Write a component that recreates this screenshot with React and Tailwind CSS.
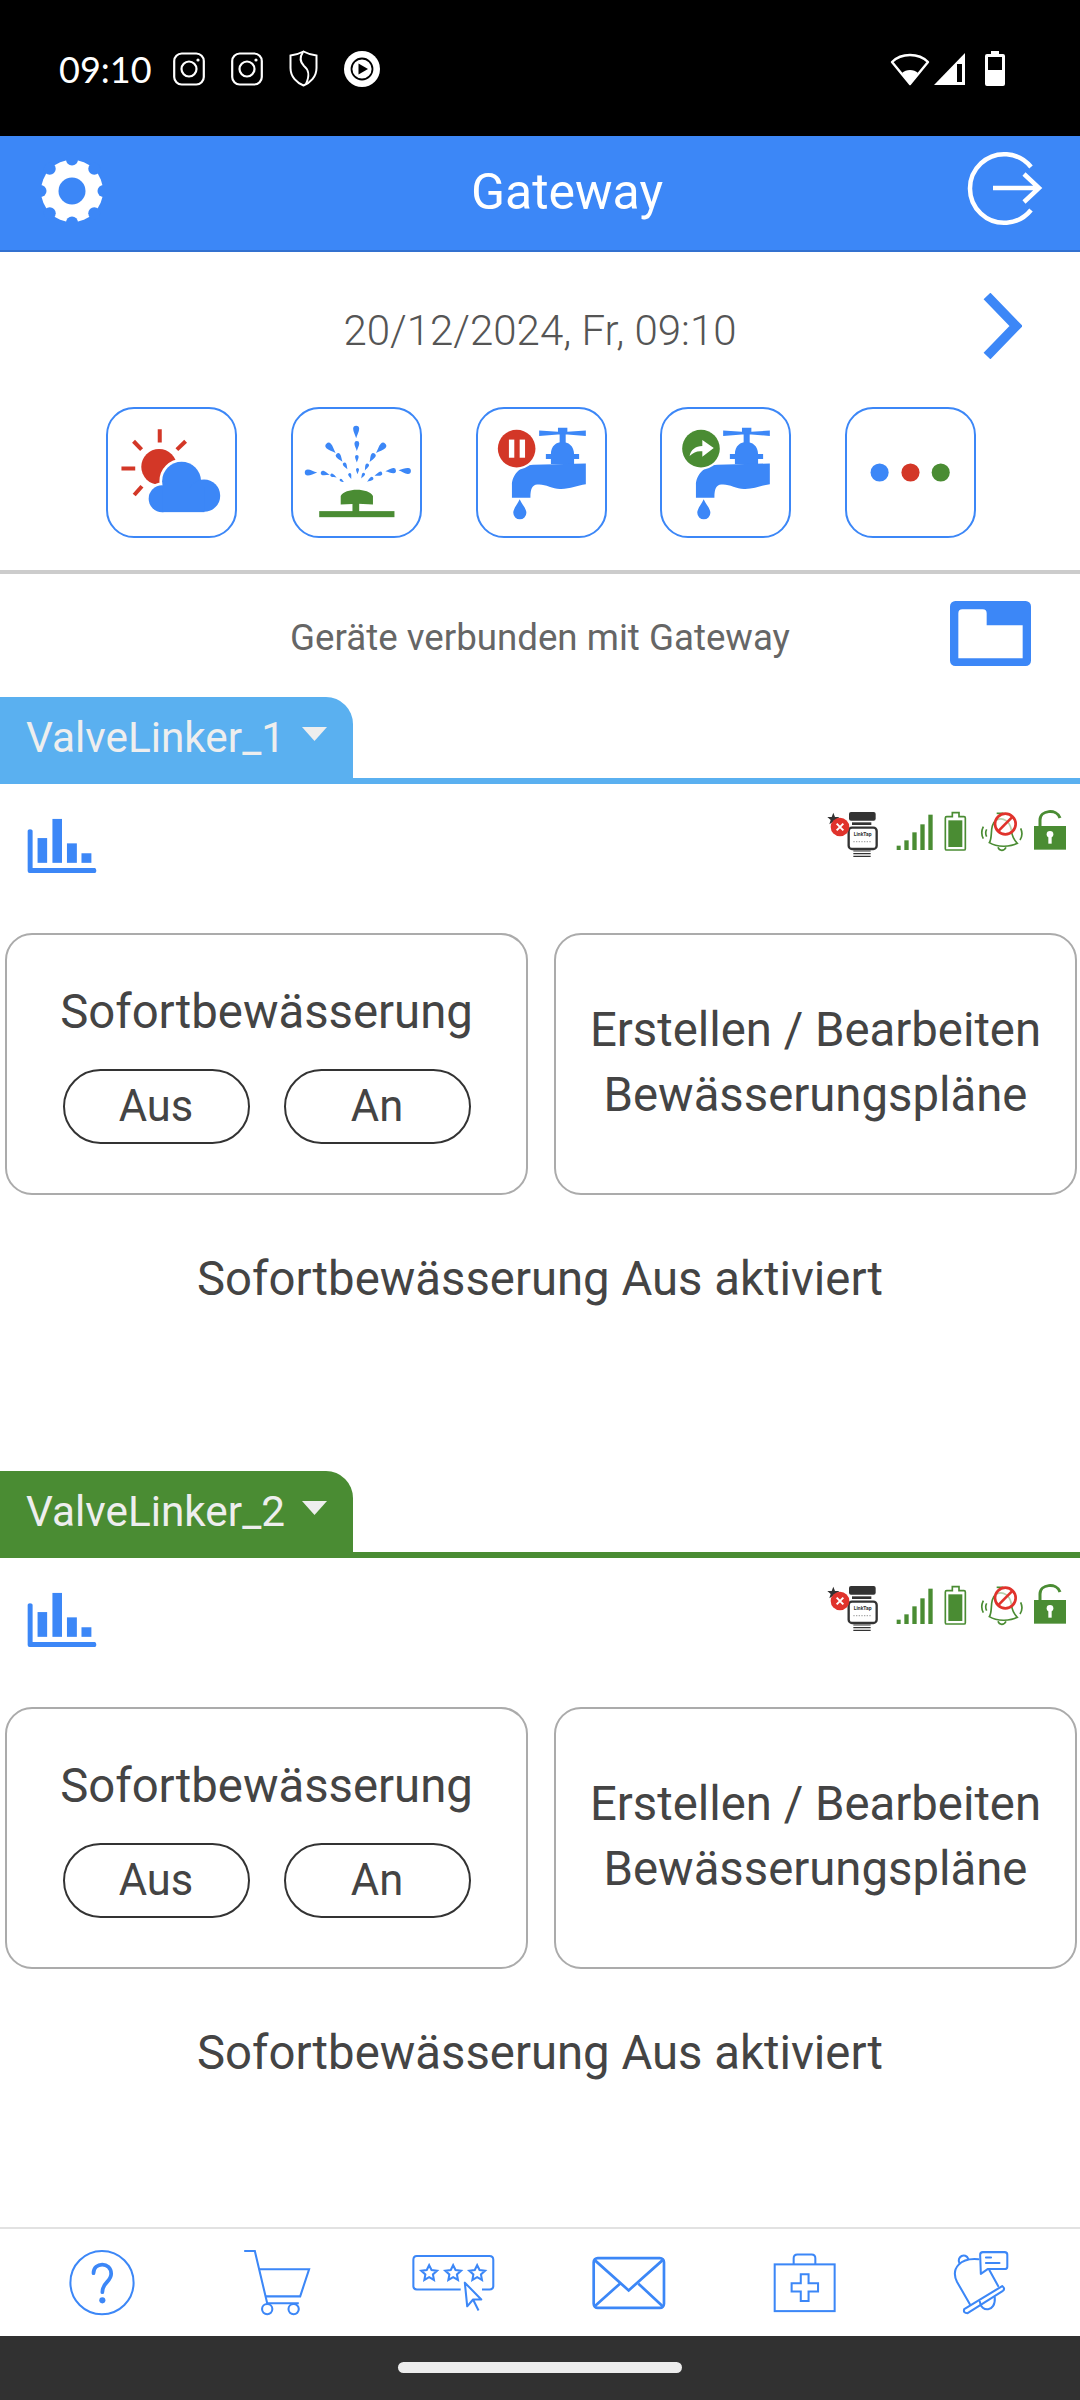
import React from "react";

const BLUE = "#3c87f7";
const RED = "#d33727";
const GREEN = "#4a8c33";
const BOX = "w-[131px] h-[131px] -m-[2px]";

function Gear() {
  const notches = [0, 45, 90, 135, 180, 225, 270, 315];
  return (
    <svg width="64" height="64" viewBox="-32 -32 64 64" className="-mt-[4px]">
      <circle r="31" fill="#fff" />
      {notches.map((a) => (
        <circle key={a} cx={31.5 * Math.sin((a * Math.PI) / 180)} cy={-31.5 * Math.cos((a * Math.PI) / 180)} r="6" fill={BLUE} />
      ))}
      <circle r="13.5" fill={BLUE} />
    </svg>
  );
}

function Insta() {
  return (
    <svg width="32" height="34" viewBox="0 0 32 34" fill="none" stroke="#fff" strokeWidth="2.2">
      <rect x="1.2" y="1.5" width="29.6" height="31" rx="7.5" />
      <circle cx="16" cy="17" r="7.5" />
      <circle cx="25" cy="8" r="1.6" fill="#fff" stroke="none" />
    </svg>
  );
}

function StatusBar() {
  return (
    <div className="h-[136px] bg-black flex items-center justify-between pl-[59px] pr-[75px] pt-[1px] shrink-0">
      <div className="flex items-center">
        <span className="text-white text-[36px] leading-none w-[114px] font-['Lato',sans-serif]">09:10</span>
        <div className="flex items-center gap-[26px]">
          <Insta />
          <Insta />
          <svg width="29" height="37" viewBox="0 0 29 37" fill="none" stroke="#fff" strokeWidth="2">
            <path d="M14.5 1.5C19 4 24 5 27.5 5.5V18C27.5 27 21 33 14.5 35.5 8 33 1.5 27 1.5 18V5.5C5 5 10 4 14.5 1.5Z" />
            <path d="M14 2C10 8 11 12 15 16 20 20 21 25 17 34" />
          </svg>
          <svg width="36" height="38" viewBox="0 0 36 38">
            <circle cx="18" cy="19" r="18" fill="#fff" />
            <circle cx="18" cy="19" r="10.5" fill="none" stroke="#000" strokeWidth="1.8" />
            <path d="M14.5 13.5L24 19L14.5 24.5Z" fill="#000" />
          </svg>
        </div>
      </div>
      <div className="flex items-center">
        <svg width="40" height="34" viewBox="0 0 40 34" className="mr-[3px]">
          <path d="M20 3C12 3 6 6 2 10L20 32L38 10C34 6 28 3 20 3Z" fill="none" stroke="#fff" strokeWidth="2.4" strokeLinejoin="round" />
          <path d="M12 21C14 19 17 18 20 18S26 19 28 21L20 32Z" fill="#fff" />
        </svg>
        <svg width="33" height="34" viewBox="0 0 33 34" className="mr-[19px]">
          <path d="M32 1V33H1Z" fill="#fff" />
          <rect x="24" y="12" width="5" height="18" fill="#000" />
        </svg>
        <svg width="20" height="35" viewBox="0 0 20 35">
          <path d="M6 0H14V3H18Q20 3 20 5V33Q20 35 18 35H2Q0 35 0 33V5Q0 3 2 3H6Z" fill="#fff" />
          <rect x="3" y="6" width="14" height="13" fill="#000" />
        </svg>
      </div>
    </div>
  );
}

function Header() {
  return (
    <div className="h-[116px] bg-[#3c87f7] border-b-2 border-[#3271d0] flex items-center justify-between pl-[40px] pr-[37px] shrink-0">
      <Gear />
      <span className="text-white text-[50px] leading-none font-['Roboto',sans-serif] ml-[65px] -mt-[3px]">Gateway</span>
      <svg width="78" height="77" viewBox="0 0 78 77" fill="none" stroke="#fff" strokeWidth="4.5" className="-mt-[9px]">
        <path d="M66 17A34.3 34.3 0 1 0 66 60" />
        <path d="M28 38H73M59 24L74 38L59 52" />
      </svg>
    </div>
  );
}

function Weather() {
  const rays = [
    [160, 66, 160, 106],
    [82, 102, 106, 127],
    [237, 102, 211, 127],
    [46, 183, 87, 183],
    [84, 262, 107, 236],
  ];
  return (
    <svg viewBox="0 0 390 390" className={BOX}>
      {rays.map((r, i) => (
        <line key={i} x1={r[0]} y1={r[1]} x2={r[2]} y2={r[3]} stroke={RED} strokeWidth="12" />
      ))}
      <circle cx="158" cy="178" r="53" fill={RED} />
      <g fill="#fff" stroke="#fff" strokeWidth="16">
        <circle cx="167" cy="273" r="40" />
        <circle cx="225" cy="221" r="58" />
        <circle cx="293" cy="264" r="48" />
      </g>
      <g fill={BLUE}>
        <circle cx="167" cy="273" r="40" />
        <circle cx="225" cy="221" r="58" />
        <circle cx="292" cy="264" r="48" />
        <rect x="167" y="240" width="126" height="73" />
      </g>
    </svg>
  );
}

function Sprinkler() {
  const drops = [
    [194, 73, 0, 1.0], [196, 115, 0, 0.8], [196, 153, 0, 0.6], [198, 190, 0, 0.5],
    [118, 122, -45, 1.05], [144, 150, -35, 0.8], [162, 175, -30, 0.6], [176, 205, -20, 0.5],
    [268, 122, 45, 1.05], [242, 150, 30, 0.8], [225, 178, 25, 0.6], [214, 204, 30, 0.5],
    [58, 195, -90, 1.0], [101, 198, -75, 0.75], [126, 205, -65, 0.55], [151, 219, -55, 0.4],
    [340, 190, 95, 1.0], [298, 190, 85, 0.85], [261, 200, 70, 0.65], [236, 216, 55, 0.6],
  ];
  return (
    <svg viewBox="0 0 390 390" className={BOX}>
      <g fill={BLUE}>
        {drops.map((d, i) => (
          <path key={i} transform={`translate(${d[0]} ${d[1]}) rotate(${d[2]}) scale(${d[3]})`} d="M0 20C-3 10-9 0-9-8A9 9 0 0 1 9-8C9 0 3 10 0 20Z" />
        ))}
      </g>
      <g fill={GREEN}>
        <rect x="84" y="310" width="224" height="18" />
        <rect x="183" y="285" width="20" height="30" />
        <path d="M148 290V265C160 240 232 240 244 265V290L200 288Z" />
      </g>
    </svg>
  );
}

function Faucet({ children }) {
  return (
    <svg viewBox="0 0 390 390" className={BOX}>
      <g transform="translate(-240 -50)" fill={BLUE}>
        <path d="M428 120L484 124V112H512V124L567 120V136L512 132H484L428 136Z" />
        <rect x="489" y="130" width="18" height="28" />
        <path d="M463 190C463 165 480 154 497 154S532 165 532 190H547V205H532V220H463V205H448V190Z" />
        <path d="M567 218V280C540 283 520 295 490 294 465 293 445 278 422 281 408 283 402 292 402 320H347V283C347 250 375 224 410 222Z" />
        <path d="M370 325C376 340 390 352 390 365A19.5 19.5 0 0 1 351 365C351 352 364 340 370 325Z" />
        {children}
      </g>
    </svg>
  );
}

function Dots() {
  return (
    <svg viewBox="0 0 390 390" className={BOX}>
      <circle cx="103" cy="195" r="27" fill={BLUE} />
      <circle cx="195" cy="195" r="27" fill={RED} />
      <circle cx="285" cy="195" r="27" fill={GREEN} />
    </svg>
  );
}

function IconBox({ children }) {
  return (
    <div className="w-[131px] h-[131px] rounded-[28px] border-2 border-[#3c87f7] overflow-hidden">{children}</div>
  );
}

function Chart() {
  return (
    <svg width="70" height="56" viewBox="80 412 212 168" fill={BLUE}>
      <path d="M82 450Q82 445 89 445Q97 445 97 450V563H285Q290 563 290 571Q290 578 285 578H88Q82 578 82 572Z" />
      <rect x="112" y="472" width="29" height="75" />
      <rect x="157" y="414" width="29" height="133" />
      <rect x="201" y="488" width="30" height="59" />
      <rect x="245" y="518" width="30" height="29" />
    </svg>
  );
}

function DeviceStatus() {
  const G = GREEN;
  return (
    <svg width="280" height="70" viewBox="0 0 840 210">
      {/* device */}
      <path d="M100 68l5 13 13 0-10 9 4 13-12-8-12 8 4-13-10-9 13 0z" fill="#333" />
      <rect x="147" y="66" width="80" height="26" rx="6" fill="#333" />
      <rect x="156" y="97" width="58" height="8" fill="#333" />
      <rect x="146" y="113" width="84" height="64" rx="10" fill="#fff" stroke="#333" strokeWidth="7" />
      <text x="188" y="137" textAnchor="middle" fontSize="15" fontWeight="700" fill="#333" fontFamily="Roboto, sans-serif">LinkTap</text>
      <path d="M160 155h56" stroke="#aaa" strokeWidth="4" strokeDasharray="4 4" />
      <path d="M160 183h52M160 191h52M160 199h52" stroke="#333" strokeWidth="3.5" />
      <circle cx="120" cy="111" r="28" fill="#e0332c" />
      <path d="M110 101l20 20M130 101l-20 20" stroke="#fff" strokeWidth="6" />
      {/* signal */}
      <g fill={G}>
        <rect x="290" y="167" width="12" height="13" />
        <rect x="313" y="151" width="13" height="29" />
        <rect x="337" y="127" width="13" height="53" />
        <rect x="361" y="103" width="13" height="77" />
        <rect x="385" y="74" width="13" height="106" />
      </g>
      {/* battery */}
      <path d="M457 80V68H477V80H492Q496 80 496 84V176Q496 180 492 180H440Q436 180 436 176V84Q436 80 440 80Z" fill="none" stroke={G} strokeWidth="5" />
      <rect x="445" y="91" width="42" height="80" fill={G} />
      {/* bell */}
      <g fill="none" stroke={G} strokeWidth="5">
        <path d="M568 158C580 140 566 105 590 90C610 80 630 95 634 120C636 140 642 150 652 160C630 172 590 172 568 158Z" />
        <path d="M594 172C598 184 612 184 618 172" />
        <path d="M550 110C544 122 544 135 550 146M560 118C556 125 556 132 560 140M662 115C668 128 668 138 660 150" />
        <path d="M590 70h20" />
      </g>
      <circle cx="616" cy="102" r="31" fill="rgba(255,255,255,0.6)" stroke="#e0332c" strokeWidth="8" />
      <path d="M594 124L638 80" stroke="#e0332c" strokeWidth="8" />
      {/* lock */}
      <path d="M720 115V90C720 60 770 55 780 84" fill="none" stroke={G} strokeWidth="9" />
      <rect x="702" y="108" width="96" height="71" fill={G} />
      <circle cx="750" cy="133" r="10" fill="#fff" />
      <rect x="745" y="135" width="10" height="26" fill="#fff" />
    </svg>
  );
}

function Pill({ children }) {
  return (
    <div className="w-[187px] h-[75px] rounded-[38px] border-2 border-[#333] flex items-center justify-center text-[43.5px] leading-none">{children}</div>
  );
}

function Device({ name, color }) {
  return (
    <section className="shrink-0">
      <div className={`h-[87px] border-b-[6px] ${color.border}`}>
        <div className={`w-[353px] h-[81px] pt-[8px] rounded-tr-[27px] ${color.bg} flex pl-[26px] pr-[26px] justify-between text-[#eee]`}>
          <span className="text-[42.3px] leading-[66px]">{name}</span>
          <svg width="25" height="14" viewBox="0 0 25 14" className="mt-[22px]">
            <path d="M0 0H25L12.5 14Z" fill="#eee" />
          </svg>
        </div>
      </div>
      <div className="flex justify-between h-[149px] pl-[27px] pt-[6px]">
        <div className="mt-[28px]"><Chart /></div>
        <DeviceStatus />
      </div>
      <div className="flex pl-[5px] pr-[3px] gap-[26px] text-[#444]">
        <div className="flex-1 h-[262px] rounded-[27px] border-2 border-[#ababab] flex flex-col items-center pt-[54px]">
          <div className="text-[47.3px] leading-[47px] mb-[33px]">Sofortbewässerung</div>
          <div className="flex gap-[34px]">
            <Pill>Aus</Pill>
            <Pill>An</Pill>
          </div>
        </div>
        <div className="flex-1 h-[262px] rounded-[27px] border-2 border-[#ababab] flex flex-col items-center justify-center pb-[2px] text-center text-[47.3px] leading-[65px]">
          <div>Erstellen / Bearbeiten</div>
          <div>Bewässerungspläne</div>
        </div>
      </div>
      <div className="text-center text-[47.3px] leading-[60px] text-[#444] mt-[54px]">Sofortbewässerung Aus aktiviert</div>
    </section>
  );
}

function BottomIcons() {
  const s = { fill: "none", stroke: BLUE };
  return (
    <div className="h-[109px] border-t-2 border-[#e2e2e2] grid grid-cols-6 pl-[14px] pr-[12px] items-center justify-items-center shrink-0 bg-white">
      <svg width="68" height="70" viewBox="194 110 198 206" {...s} strokeWidth="6">
        <circle cx="293" cy="212" r="93" />
        <path d="M268 184C268 150 320 150 320 186C320 210 294 210 294 240" strokeWidth="11" strokeLinecap="round" />
        <circle cx="294" cy="264" r="9" fill={BLUE} stroke="none" />
      </svg>
      <svg width="69" height="68" viewBox="706 116 200 198" {...s} strokeWidth="6">
        <path d="M709 122H740L776 274H868" />
        <path d="M752 175H898L872 254H771" />
        <circle cx="776" cy="291" r="15" />
        <circle cx="853" cy="291" r="15" />
      </svg>
      <svg width="83" height="58" viewBox="1198 130 242 168" {...s} strokeWidth="6">
        <path d="M1340 233H1212Q1202 233 1202 223V146Q1202 135 1212 135H1424Q1435 135 1435 146V223Q1435 233 1424 233H1402" />
        <path d="M1248 162l7 14 16 2-12 11 3 16-14-8-14 8 3-16-12-11 16-2zM1318 162l7 14 16 2-12 11 3 16-14-8-14 8 3-16-12-11 16-2zM1388 162l7 14 16 2-12 11 3 16-14-8-14 8 3-16-12-11 16-2z" />
        <path d="M1352 213L1359 282L1376 262L1400 262ZM1376 262L1392 294" strokeLinejoin="round" />
      </svg>
      <svg width="74" height="54" viewBox="152 136 220 160" {...s} strokeWidth="8">
        <rect x="157" y="142" width="209" height="148" rx="12" />
        <path d="M160 148L261 238L362 148M235 218L160 285M290 218L362 285" />
      </svg>
      <svg width="63" height="60" viewBox="680 125 186 176" {...s} strokeWidth="6">
        <rect x="685" y="158" width="177" height="138" />
        <path d="M741 158V140Q741 129 752 129H794Q805 129 805 140V158" />
        <path d="M762 187H785V214H813V238H785V266H762V238H735V214H762Z" />
      </svg>
      <svg width="57" height="66" viewBox="1200 116 168 194" {...s} strokeWidth="6" strokeLinejoin="round" strokeLinecap="round">
        <path d="M1254 278L1215 210C1195 170 1225 138 1278 143" />
        <path d="M1310 175L1336 222" />
        <path d="M1222 155C1212 135 1240 122 1248 142" />
        <path d="M1236 290L1348 222Q1358 230 1350 236L1246 302Q1232 302 1236 290Z" />
        <path d="M1282 268C1285 300 1330 300 1326 255" />
        <path d="M1283 130Q1283 122 1291 122H1355Q1363 122 1363 130V165Q1363 172 1355 172H1305L1285 186Z" />
        <path d="M1300 138H1315M1300 154H1340" />
      </svg>
    </div>
  );
}

export default function App() {
  return (
    <div className="w-[1080px] h-[2400px] flex flex-col bg-white overflow-hidden font-['Roboto',sans-serif]">
      <StatusBar />
      <Header />
      <div className="h-[318px] shrink-0 flex flex-col">
        <div className="grid grid-cols-[1fr_auto_1fr] items-center h-[156px] pt-[2px]">
          <div />
          <span className="text-[42px] leading-none font-light text-[#555]">20/12/2024, Fr, 09:10</span>
          <svg width="40" height="66" viewBox="0 0 40 66" fill="none" stroke={BLUE} strokeWidth="9.5" className="justify-self-end mr-[58px] -mt-[10px]">
            <path d="M5 3L34 33L5 63" />
          </svg>
        </div>
        <div className="flex pl-[106px] gap-[53.75px] -mt-[1px]">
          <IconBox><Weather /></IconBox>
          <IconBox><Sprinkler /></IconBox>
          <IconBox>
            <Faucet>
              <circle cx="361" cy="174" r="62" fill="#fff" />
              <circle cx="361" cy="174" r="56" fill={RED} />
              <rect x="338" y="147" width="16" height="54" fill="#fff" />
              <rect x="370" y="147" width="16" height="54" fill="#fff" />
            </Faucet>
          </IconBox>
          <IconBox>
            <Faucet>
              <circle cx="362" cy="174" r="62" fill="#fff" />
              <circle cx="362" cy="174" r="56" fill={GREEN} />
              <path d="M328 196C332 176 346 167 366 166V148L400 172L366 198V182C352 180 340 184 328 196Z" fill="#fff" />
            </Faucet>
          </IconBox>
          <IconBox><Dots /></IconBox>
        </div>
      </div>
      <div className="h-[4px] bg-[#cccccc] shrink-0" />
      <div className="grid grid-cols-[1fr_auto_1fr] items-center h-[123px] shrink-0">
        <div />
        <span className="text-[36.7px] leading-none text-[#666] mt-[6px]">Geräte verbunden mit Gateway</span>
        <svg width="81" height="65" viewBox="1110 638 243 195" className="justify-self-end mr-[49px] -mt-[4px]">
          <rect x="1110" y="638" width="243" height="195" rx="16" fill={BLUE} />
          <path d="M1135 675Q1135 663 1147 663H1208Q1220 663 1220 675V711H1328V810H1135Z" fill="#fff" />
        </svg>
      </div>
      <div className="flex-1 flex flex-col gap-[162px] overflow-hidden">
        <Device name="ValveLinker_1" color={{ bg: "bg-[#5ab0f0]", border: "border-[#5ab0f0]" }} />
        <Device name="ValveLinker_2" color={{ bg: "bg-[#4a8c33]", border: "border-[#4a8c33]" }} />
      </div>
      <BottomIcons />
      <div className="h-[64px] bg-[#313131] flex items-center justify-center shrink-0 pb-[1px]">
        <div className="w-[284px] h-[11px] rounded-full bg-[#ececec]" />
      </div>
    </div>
  );
}
